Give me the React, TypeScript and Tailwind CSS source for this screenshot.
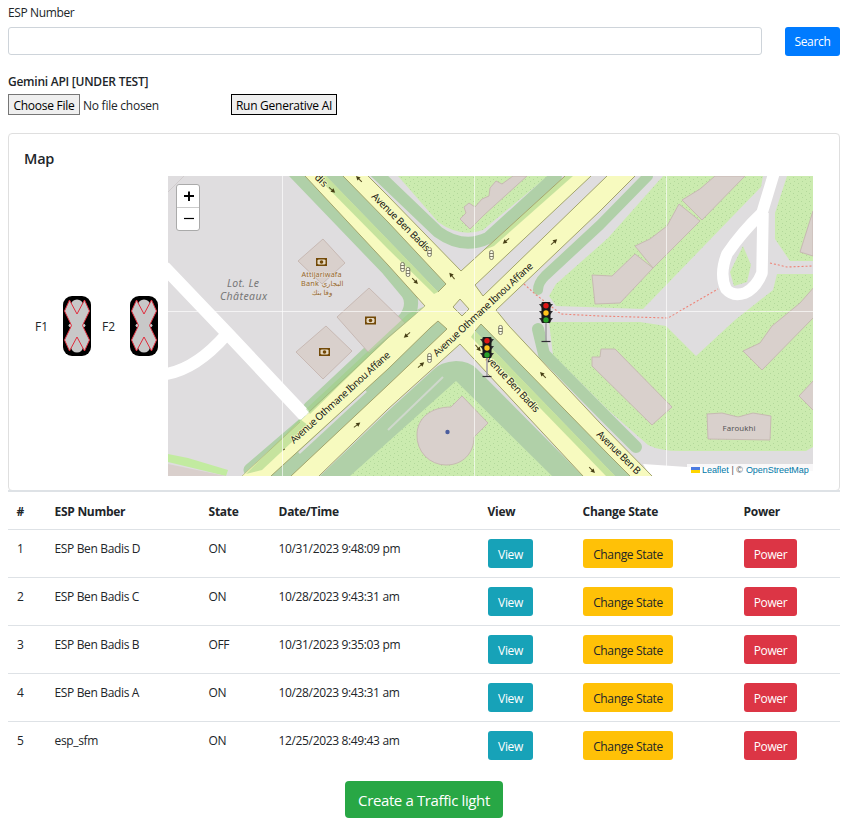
import React from "react";

const rows = [
  { id: 1, name: "ESP Ben Badis D", state: "ON", date: "10/31/2023 9:48:09 pm" },
  { id: 2, name: "ESP Ben Badis C", state: "ON", date: "10/28/2023 9:43:31 am" },
  { id: 3, name: "ESP Ben Badis B", state: "OFF", date: "10/31/2023 9:35:03 pm" },
  { id: 4, name: "ESP Ben Badis A", state: "ON", date: "10/28/2023 9:43:31 am" },
  { id: 5, name: "esp_sfm", state: "ON", date: "12/25/2023 8:49:43 am" },
];

function Lane() {
  return (
    <svg width="28" height="60" viewBox="0 0 28 60" className="block shrink-0">
      <rect width="28" height="60" rx="9" fill="#000" />
      <g fill="#c8c8c8">
        <ellipse cx="14" cy="9" rx="6" ry="5.5" />
        <ellipse cx="14" cy="51" rx="6" ry="5.5" />
        <ellipse cx="14" cy="29.5" rx="8.5" ry="3.5" />
        <path d="M8 8H20V24H8ZM8 36H20V52H8Z" />
        <path d="M6.5 4 1.5 15 8.5 29.5 1.5 44 6.5 55 14 41 21.5 55 26.5 44 19.5 29.5 26.5 15 21.5 4 14 18Z" />
      </g>
      <path
        d="M6.5 4 1.5 15 8.5 29.5 1.5 44 6.5 55 14 41 21.5 55 26.5 44 19.5 29.5 26.5 15 21.5 4 14 18Z"
        fill="none"
        stroke="#e02c3c"
        strokeWidth="1"
      />
    </svg>
  );
}

function Arrow({ x, y, a }: { x: number; y: number; a: number }) {
  return (
    <g transform={`translate(${x} ${y}) rotate(${a})`}>
      <path d="M-4 0H1" stroke="#554d20" strokeWidth="1" />
      <path d="M0-2.2 4.2 0 0 2.2Z" fill="#453e14" />
    </g>
  );
}

function Signal({ x, y }: { x: number; y: number }) {
  return (
    <g transform={`translate(${x} ${y})`} fill="#fff" fillOpacity=".6" stroke="#625f50" strokeWidth=".8">
      <rect x="-1.8" y="-4.5" width="3.6" height="9" rx="1.6" />
      <path d="M-1.8-1.5H1.8M-1.8 1.5H1.8" />
    </g>
  );
}

function Bank({ x, y }: { x: number; y: number }) {
  return (
    <g transform={`translate(${x} ${y})`}>
      <rect x="-5.5" y="-4" width="11" height="8" fill="#734a08" />
      <path d="M-3-2.5H3L4-1.5V1.5L3 2.5H-3L-4 1.5V-1.5Z" fill="#e6d9c3" />
      <circle r="1.8" fill="#734a08" />
    </g>
  );
}

function TrafficLight({ x, y }: { x: number; y: number }) {
  return (
    <g transform={`translate(${x} ${y})`}>
      <path d="M0 10V28" stroke="#a5a2a8" strokeWidth="1.6" />
      <path d="M-4.5 28.5H4.5" stroke="#302e35" strokeWidth="1.2" />
      <path d="M-7-9H7L4-5H-4ZM-7-2H7L4 2H-4ZM-7 5H7L4 9H-4Z" fill="#353337" />
      <rect x="-4.5" y="-11" width="9" height="21" rx="1.2" fill="#19191b" />
      <circle cy="-7.3" r="2.7" fill="#de1616" />
      <circle r="2.7" fill="#ffc31c" />
      <circle cy="6.9" r="2.7" fill="#2aa12b" />
    </g>
  );
}

function StreetMap() {
  return (
    <svg
      width="645"
      height="300"
      viewBox="168 176 645 300"
      className="block [font-family:'Noto_Sans','DejaVu_Sans',sans-serif]"
    >
      <defs>
        <pattern id="grass" width="8" height="8" patternUnits="userSpaceOnUse">
          <rect width="8" height="8" fill="#cbebaf" />
          <path d="M1 1.5h1M5 3.5h1M2 5.5h1M6 7.5h1" stroke="#b2d89a" strokeWidth="1" />
        </pattern>
      </defs>
      <rect x="168" y="176" width="645" height="300" fill="#dfdddf" />
      <path d="M168 192 184 176" stroke="#d0cccd" fill="none" />

      <g fill="url(#grass)">
        <path d="M398 176 438 222Q460 238 483 230L548 176Z" />
        <path d="M549 296 556 284 608 238 663 176H763L761 187 730 219 643 309 556 306Z" />
        <path d="M743 246 751 265 747 282 734 286 730 272Z" />
        <path d="M787 176 775 213V239L790 261H813V176Z" />
        <path d="M813 274H777L773 290 735 320 696 356 666 326 640 322H549L553 355 608 410 648 445Q660 451 680 451H806L813 447Z" />
        <path d="M456 376 556 476H340Z" />
      </g>
      <path d="M168 454 188 458 228 470 226 476 168 462Z" fill="#c2eba0" />
      <path d="M168 464 226 476H168Z" fill="#d9cfcc" />

      <g fill="none" stroke="#b0d0a8" strokeLinecap="round" strokeLinejoin="round">
        <path d="M292 169 388 269 408 293Q415 304 406 318L310 408" strokeWidth="14" />
        <path d="M306 422 250 470" strokeWidth="13" />
        <path d="M369 166 438 232Q463 250 488 238L556 176" strokeWidth="12" />
        <path d="M538 290Q538 283 545 276L600 225 648 176" strokeWidth="10" />
        <path d="M538 329 544 354 608 419 636 447" strokeWidth="12" />
      </g>
      <path
        d="M320 476 388 411 433 370Q440 362 456 361 469 361 477 369L583 476H552L456 381 350 476Z"
        fill="#b0d0a8"
      />
      <path d="M388 430 443 377" stroke="#cfd8cc" strokeWidth="2" />

      <g fill="#d9d0cc" stroke="#c5b6b0" strokeWidth=".9">
        <path d="M323 239 345 263 322 284 298 261Z" />
        <path d="M369 288 405 323 369 353 337 317Z" />
        <path d="M326 326 352 351 323 379 296 352Z" />
        <path d="M451 407 462 396 488 423 474 437C474 453 463 465 446 465A29 29 0 0 1 417 435C417 418 431 407 451 407Z" />
        <path d="M470 229 460 219 466 213 464 207 469 203 475 207 482 199 489 196 490 188 496 181 502 184 513 176H527L516 186 484 215Z" />
        <path d="M745 176 702 220 682 200 700 189 715 176Z" />
        <path d="M679 204 700 221 653 268 635 246 650 239 667 226Z" />
        <path d="M635 254 653 268 620 303 595 304 592 275 612 276Z" />
        <path d="M813 211 800 252 813 256Z" />
        <path d="M815 286 800 303 783 317 772 326 760 343 743 351 762 370 815 316Z" />
        <path d="M592 366V357H600L601 349H615L672 407 652 425Z" />
        <path d="M707 414 722 413 738 417 753 413 771 416 770 440 708 439Z" />
        <path d="M814 380 799 396 814 411Z" />
      </g>

      <g fill="none" stroke="#fff">
        <path d="M164 267 228 334 305 416" strokeWidth="13" />
        <path d="M226 335Q196 369 166 374" strokeWidth="12" />
        <path
          d="M775 170 762 213Q742 232 727 254 719 274 726 289 733 297 745 293 756 288 762 273L763 213"
          strokeWidth="11.5"
          strokeLinejoin="round"
        />
      </g>
      <path d="M643 464 687 467 813 471V476H650Z" fill="#fff" />

      <path
        d="M305 176 388 265 425 306 388 338 242 476H319L388 409 460 344 583 476H652L600 423 509 326 496 310 600 211 635 176H565L461 271 388 196 368 176Z"
        fill="#f7fabf"
      />
      <g fill="#b0d0a8">
        <path d="M326 176H343L388 222 446 284 438 292 388 240Z" />
        <path d="M271 476 388 369 430 328 438 321 447 329 388 385 291 476Z" />
        <path d="M475 331 481 324 608 454 630 476H615Z" />
      </g>
      <g fill="#9fcf84" fillOpacity=".55">
        <path d="M326 176 388 240 438 292 434 294 388 249 316 176Z" />
        <path d="M408 314 425 306 388 338 310 414 306 409Z" />
        <path d="M300 419 309 426 262 470 246 474Z" />
        <path d="M484 250 565 176 573 176 494 246Z" />
        <path d="M475 331 615 476H606L471 337Z" />
      </g>
      <path d="M299 453 366 391" stroke="#dcdcdc" strokeWidth="2.5" />
      <path d="M475 285 591 176H607L483 296ZM460 299 469 309 462 316 453 307Z" fill="#dfdddf" />
      <g fill="none" stroke="#a3a56c" strokeWidth="1">
        <path d="M305 176 388 265 425 306M368 176 388 196 461 271 565 176M343 176 388 222 446 284 438 292" />
        <path d="M475 285 591 176M607 176 483 296 475 285M635 176 600 211 496 310 509 326 600 423 652 476" />
        <path d="M271 476 388 369 430 328 438 321 447 329 388 385 291 476M319 476 388 409 460 344 583 476" />
        <path d="M475 331 481 324 608 454 630 476M460 299 469 309 462 316 453 307Z" />
        <path d="M242 476 300 422M309 412 388 338 425 306" strokeOpacity=".55" />
      </g>

      <g fill="none" stroke="#ee8377" strokeWidth="1.1" strokeDasharray="2 2">
        <path d="M524 284 535 294 561 314 600 316 668 318 718 289" />
        <path d="M770 263 787 267 813 266" />
      </g>

      <g stroke="#fff" strokeOpacity=".65" strokeWidth="1">
        <path d="M282.5 176V476M474.5 176V476M666.5 176V476M168 311.5H813" />
      </g>

      <Arrow x={332} y={190} a={42} />
      <Arrow x={359} y={179} a={225} />
      <Arrow x={415} y={281} a={45} />
      <Arrow x={452} y={276} a={230} />
      <Arrow x={506} y={241} a={140} />
      <Arrow x={554} y={242} a={-42} />
      <Arrow x={407} y={335} a={140} />
      <Arrow x={421} y={365} a={-40} />
      <Arrow x={357} y={425} a={-38} />
      <Arrow x={543} y={375} a={225} />
      <Arrow x={478} y={348} a={50} />
      <Arrow x={592} y={470} a={45} />
      <Signal x={429.5} y={252} />
      <Signal x={402.5} y={267} />
      <Signal x={408} y={272} />
      <Signal x={491.5} y={255} />
      <Signal x={429.5} y={358} />
      <Signal x={500.5} y={330} />
      <path d="m283 450 2-1" stroke="#554d20" />

      <g fill="#1b1b16" fontSize="10" stroke="#f7fabf" strokeWidth="1.6" paintOrder="stroke" strokeLinejoin="round">
        <text transform="translate(371 197) rotate(45)" textLength="78">Avenue Ben Badis</text>
        <text transform="translate(294 444) rotate(-42.3)" textLength="131">Avenue Othmane Ibnou Affane</text>
        <text transform="translate(437 357) rotate(-43)" textLength="132">Avenue Othmane Ibnou Affane</text>
        <text transform="translate(482 356) rotate(47)" textLength="78">Avenue Ben Badis</text>
        <text transform="translate(596 435) rotate(44.5)" textLength="57">Avenue Ben B</text>
        <text transform="translate(314 178) rotate(45)">dis</text>
      </g>
      <g fill="#777" fontSize="10.5" fontStyle="italic" textAnchor="middle">
        <text x="243" y="287" textLength="32">Lot. Le</text>
        <text x="243.5" y="300" textLength="47">Châteaux</text>
      </g>
      <Bank x={321.5} y={262} />
      <Bank x={370.5} y={320.5} />
      <Bank x={324.5} y={352} />
      <g fill="#92682f" fontSize="7.3" textAnchor="middle" stroke="#e8e0dc" strokeWidth="1" paintOrder="stroke">
        <text x="321.5" y="276.5" textLength="40">Attijariwafa</text>
        <text x="310" y="286" textLength="18">Bank</text>
        <text x="332.5" y="286" fontSize="7" direction="rtl">البجاري</text>
        <text x="322" y="295" fontSize="7" direction="rtl">وفا بنك</text>
      </g>
      <text x="739" y="431" fontSize="7.8" textAnchor="middle" textLength="33" fill="#555">Faroukhi</text>
      <circle cx="447.5" cy="432" r="2.2" fill="#4b5e9e" />
      <TrafficLight x={546} y={313} />
      <TrafficLight x={487} y={348} />
    </svg>
  );
}

function ActionButton({ className, children }: { className: string; children: React.ReactNode }) {
  return (
    <button className={`block h-[29px] rounded-[3px] text-center whitespace-nowrap pt-[3px] ${className}`}>
      {children}
    </button>
  );
}

export default function App() {
  return (
    <main className="h-[824px] w-[849px] overflow-hidden bg-white pr-[9px] pl-2 text-[12px] leading-[18px] text-[#212529] [font-family:'Open_Sans','Noto_Sans',sans-serif]">
      <label className="block h-[27px] pt-1 tracking-[-0.38px]">ESP Number</label>
      <div className="flex justify-between">
        <input className="h-7 w-[754px] rounded-[3px] border border-[#ced4da] px-2 outline-none" />
        <button className="h-[29px] w-[55px] rounded-[3px] bg-[#007bff] pt-px tracking-[-0.3px] text-white">Search</button>
      </div>
      <div className="pt-[17px] font-semibold tracking-[-0.25px] text-[#212529]">Gemini API [UNDER TEST]</div>
      <div className="mt-[3px] flex h-[21px] items-center tracking-[-0.25px]">
        <button className="h-[21px] w-[72px] border border-[#767676] bg-[#efefef] pt-[2px] leading-[18px] whitespace-nowrap text-black">Choose File</button>
        <span className="ml-[3px] w-[148px] pt-0.5">No file chosen</span>
        <button className="h-[21px] w-[106px] border border-black bg-[#efefef] pt-[2px] leading-[18px] whitespace-nowrap text-black">Run Generative AI</button>
      </div>

      <section className="mt-[18px] h-[358px] rounded-[4px] border border-[#dfdfdf] px-[15px] pt-[14px]">
        <h5 className="h-[28px] pt-px text-[14.5px] leading-5 font-semibold tracking-[-0.2px]">Map</h5>
        <div className="flex h-[300px] items-center">
          <span className="ml-[11px] w-7 pt-0.5">F1</span>
          <Lane />
          <span className="ml-[11px] w-7 pt-0.5">F2</span>
          <Lane />
          <div className="relative ml-[10px] h-[300px] w-[645px] shrink-0 overflow-hidden">
            <StreetMap />
            <div className="absolute top-2 left-2 h-[47px] w-6 rounded-[3px] border border-[#aaa] bg-white">
              <button className="flex h-[23px] w-full items-center justify-center border-b border-[#ccc] pl-px">
                <svg width="12" height="12" viewBox="0 0 12 12"><path d="M6 1.5v9.5M1 6h10" stroke="#000" strokeWidth="1.9" /></svg>
              </button>
              <button className="flex h-[22px] w-full items-center justify-center pl-px">
                <svg width="12" height="12" viewBox="0 0 12 12"><path d="M1 5.5h10" stroke="#000" strokeWidth="1.2" /></svg>
              </button>
            </div>
            <div className="absolute right-0 bottom-0 flex h-3 w-[126px] items-center bg-white/80 pl-1 text-[9px] leading-3 tracking-[-0.06px] whitespace-nowrap [font-family:'Liberation_Sans',sans-serif]">
              <svg width="9" height="6" viewBox="0 0 9 6" className="mr-[2px]"><path fill="#4c7be1" d="M0 0h9v3H0z" /><path fill="#ffd500" d="M0 3h9v3H0z" /></svg>
              <span className="text-[#0078a8]">Leaflet</span>
              <span className="mx-[3px] text-[#555]">| ©</span>
              <span className="text-[#0078a8]">OpenStreetMap</span>
            </div>
          </div>
        </div>
      </section>

      <table className="-mt-px w-full table-fixed border-collapse">
        <colgroup>
          <col className="w-[38px]" /><col className="w-[154px]" /><col className="w-[70px]" /><col className="w-[209px]" />
          <col className="w-[95px]" /><col className="w-[161px]" /><col className="w-[105px]" />
        </colgroup>
        <thead>
          <tr className="h-[38px] border-t-2 border-b border-[#dee2e6] text-left tracking-[-0.3px]">
            {["#", "ESP Number", "State", "Date/Time", "View", "Change State", "Power"].map((t) => (
              <th key={t} className="p-0 pt-[3px] pl-[8.6px] font-bold">{t}</th>
            ))}
          </tr>
        </thead>
        <tbody>
          {rows.map((r) => (
            <tr key={r.id} className="h-12 border-t border-[#dee2e6] align-top tracking-[-0.35px]">
              <td className="pt-[10px] pl-[9px]">{r.id}</td>
              <td className="pt-[10px] pl-[8.5px]">{r.name}</td>
              <td className="pt-[10px] pl-[8.5px]">{r.state}</td>
              <td className="pt-[10px] pl-[8.5px]">{r.date}</td>
              <td className="pt-[9px] pl-[9px]"><ActionButton className="w-[45px] bg-[#17a2b8] text-white">View</ActionButton></td>
              <td className="pt-[9px] pl-[9px]"><ActionButton className="w-[90px] bg-[#ffc107]">Change State</ActionButton></td>
              <td className="pt-[9px] pl-[9px]"><ActionButton className="w-[53px] bg-[#dc3545] text-white">Power</ActionButton></td>
            </tr>
          ))}
        </tbody>
      </table>
      <div className="mt-3 flex justify-center">
        <button className="h-[37px] w-[158px] rounded-[4px] bg-[#28a745] text-[15px] tracking-[-0.38px] whitespace-nowrap text-white">Create a Traffic light</button>
      </div>
    </main>
  );
}
